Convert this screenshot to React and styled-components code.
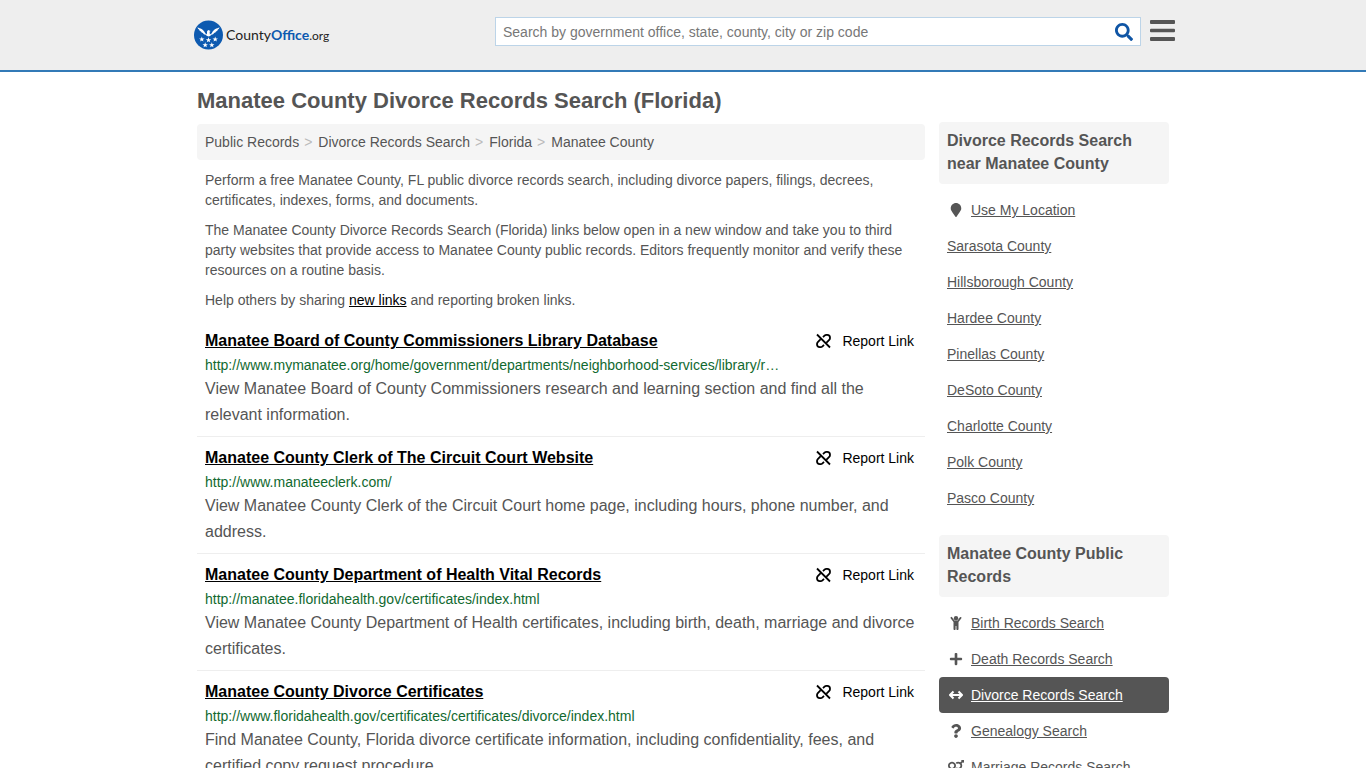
import React from "react";
import styled, { createGlobalStyle } from "styled-components";
import {
  FaSearch,
  FaMapMarker,
  FaPlus,
  FaQuestion,
  FaVenusMars,
} from "react-icons/fa";

const COLORS = {
  text: "#555",
  blue: "#0f55a5",
  brand: "#0d5ab0",
  line: "#337ab7",
  panel: "#f5f5f5",
  url: "#11692f",
};

const GlobalStyle = createGlobalStyle`
  * {
    box-sizing: border-box;
  }
  html {
    scrollbar-width: none;
  }
  body {
    margin: 0;
    background: #fff;
    color: ${COLORS.text};
    font-family: "Liberation Sans", Arial, sans-serif;
    font-size: 14px;
    line-height: 20px;
  }
`;

const Header = styled.header`
  background: #eee;
  border-bottom: 2px solid ${COLORS.line};
`;

const HeaderInner = styled.div`
  display: flex;
  align-items: flex-start;
  max-width: 984px;
  height: 70px;
  margin: 0 auto;
  padding-top: 17px;
`;

const LogoLink = styled.a`
  display: flex;
  align-items: center;
  flex: 0 0 304px;
  height: 36px;
  color: #222;
  font-family: Lato, sans-serif;
  font-size: 14px;
  text-decoration: none;
  b {
    color: ${COLORS.brand};
  }
  small {
    font-size: 12px;
  }
  svg {
    margin-right: 2px;
  }
`;

const SearchForm = styled.form`
  display: flex;
  flex: 1;
  height: 29px;
  border: 1px solid #bcd4e8;
  background: #fff;
`;

const SearchInput = styled.input`
  flex: 1;
  min-width: 0;
  padding: 0 7px;
  border: 0;
  outline: 0;
  background: transparent;
  font: inherit;
  &::placeholder {
    color: #777;
    opacity: 1;
  }
`;

const IconButton = styled.button`
  display: flex;
  align-items: center;
  padding: 0;
  border: 0;
  background: transparent;
  color: ${(props) => props.$color};
  cursor: pointer;
`;

const SearchButton = styled(IconButton)`
  padding: 0 7px;
`;

const MenuButton = styled(IconButton)`
  margin-left: 9px;
`;

const Page = styled.div`
  display: grid;
  grid-template-columns: minmax(0, 1fr) 230px;
  column-gap: 14px;
  max-width: 972px;
  margin: 0 auto;
`;

const Title = styled.h1`
  margin: 17px 0 11px;
  font-size: 22px;
  line-height: 24px;
`;

const Breadcrumbs = styled.nav`
  display: flex;
  padding: 8px;
  border-radius: 4px;
  background: ${COLORS.panel};
  a {
    color: ${COLORS.text};
    text-decoration: none;
  }
  a + a::before {
    content: ">";
    padding: 0 6px 0 5px;
    color: #bbb;
  }
`;

const Text = styled.p`
  margin: 10px 8px;
  a {
    color: #000;
  }
`;

const Results = styled.ul`
  margin: 0;
  padding: 0;
  list-style: none;
`;

const Result = styled.li`
  padding: 8px;
  border-bottom: 1px solid #eee;
`;

const ResultTop = styled.div`
  display: flex;
  justify-content: space-between;
  line-height: 26px;
`;

const ResultLink = styled.a`
  color: #000;
  font-size: 16px;
  font-weight: bold;
  line-height: 25px;
`;

const ReportLink = styled.a`
  display: flex;
  align-items: center;
  gap: 10px;
  padding-right: 3px;
  color: #000;
  text-decoration: none;
`;

const ResultUrl = styled.div`
  max-width: 578px;
  overflow: hidden;
  color: ${COLORS.url};
  line-height: 22px;
  text-overflow: ellipsis;
  white-space: nowrap;
`;

const ResultText = styled.div`
  font-size: 16px;
  line-height: 26px;
`;

const Sidebar = styled.aside`
  padding-top: 50px;
`;

const SideTitle = styled.h2`
  margin: 0 0 8px;
  padding: 7px 8px 9px;
  border-radius: 4px;
  background: ${COLORS.panel};
  font-size: 16px;
  line-height: 23px;
`;

const SideList = styled.ul`
  margin: 0 0 19px;
  padding: 0;
  list-style: none;
`;

const SideLink = styled.a`
  display: flex;
  align-items: center;
  height: 36px;
  padding: 0 8px;
  border-radius: 4px;
  background: ${(props) => (props.$active ? COLORS.text : "transparent")};
  color: ${(props) => (props.$active ? "#fff" : COLORS.text)};
`;

const SideIcon = styled.span`
  display: flex;
  justify-content: center;
  width: 18px;
  margin-right: 6px;
`;

const STAR = "M0-2.700L.7-.8 2.700-.8 1.100.4 1.700 2.300 0 1.200-1.700 2.300-1.100.4-2.700-.8-.7-.8z";

const STARS = [
  [9.8, 20.3],
  [16.5, 21],
  [23.2, 20.3],
  [13.2, 26],
  [19.8, 26],
];

const RESULTS = [
  {
    title: "Manatee Board of County Commissioners Library Database",
    url: "http://www.mymanatee.org/home/government/departments/neighborhood-services/library/r…",
    text: "View Manatee Board of County Commissioners research and learning section and find all the relevant information.",
  },
  {
    title: "Manatee County Clerk of The Circuit Court Website",
    url: "http://www.manateeclerk.com/",
    text: "View Manatee County Clerk of the Circuit Court home page, including hours, phone number, and address.",
  },
  {
    title: "Manatee County Department of Health Vital Records",
    url: "http://manatee.floridahealth.gov/certificates/index.html",
    text: "View Manatee County Department of Health certificates, including birth, death, marriage and divorce certificates.",
  },
  {
    title: "Manatee County Divorce Certificates",
    url: "http://www.floridahealth.gov/certificates/certificates/divorce/index.html",
    text: "Find Manatee County, Florida divorce certificate information, including confidentiality, fees, and certified copy request procedure.",
  },
];

const NEARBY = [
  { name: "Use My Location", icon: FaMapMarker },
  { name: "Sarasota County" },
  { name: "Hillsborough County" },
  { name: "Hardee County" },
  { name: "Pinellas County" },
  { name: "DeSoto County" },
  { name: "Charlotte County" },
  { name: "Polk County" },
  { name: "Pasco County" },
];

const RECORDS = [
  { name: "Birth Records Search", icon: Child },
  { name: "Death Records Search", icon: FaPlus },
  { name: "Divorce Records Search", icon: Arrows, active: true },
  { name: "Genealogy Search", icon: FaQuestion },
  { name: "Marriage Records Search", icon: FaVenusMars, size: 16 },
];

function Logo() {
  return (
    <svg width="33" height="32" viewBox="-1 0 33 32" aria-hidden="true">
      <circle cx="16.5" cy="16" r="14.5" fill={COLORS.brand} />
      <g fill="#fff">
        <path d="M5.500 8.300C8 9.600 11.500 10 13.200 14.200l1.700 1.300.2-3.300 1.100-1.200 2.400.9-1 .8.300 2.800 1.900-1.300C21.500 10 25 9.600 27.500 8.300c-.2 1.300-.9 2-1.800 2.400.1.900-.7 1.500-1.800 1.700 0 .9-.8 1.400-1.900 1.500-.4 1-1.300 1.500-2.400 1.500-.7 1-1.800 1.600-3.100 2.200-1.300-.6-2.400-1.200-3.100-2.200-1.100 0-2-.5-2.400-1.500-1.100-.1-1.900-.6-1.900-1.500-1.100-.2-1.900-.8-1.800-1.700-.9-.4-1.600-1.100-1.800-2.400z" />
        {STARS.map(([x, y]) => (
          <path key={x} d={STAR} transform={`translate(${x} ${y})`} />
        ))}
      </g>
    </svg>
  );
}

function BrokenLink() {
  return (
    <svg width="17" height="16" viewBox="0 0 17 16" fill="none" stroke="currentColor" strokeWidth="1.8" aria-hidden="true">
      <path d="M2 1.500l13 13" />
      <path d="M8 4.200l1.500-1.500a2.800 2.800 0 0 1 2-.8h.7a2.800 2.800 0 0 1 2.800 2.800v.2a2.800 2.800 0 0 1-.8 2L11.300 9.800" />
      <path d="M9 11.800l-1.500 1.500a2.800 2.800 0 0 1-2 .8h-.7A2.800 2.800 0 0 1 2 11.300v-.2a2.800 2.800 0 0 1 .8-2L5.700 6.200" />
    </svg>
  );
}

function Child() {
  return (
    <svg width="14" height="14" viewBox="0 0 14 14" fill="currentColor" aria-hidden="true">
      <circle cx="7" cy="2.300" r="2.200" />
      <path d="M1.800 1.200a.9.900 0 0 1 1.300 0L5.400 4.400h3.200l2.300-3.200a.9.900 0 0 1 1.300 1.300L9.500 6v7a1 1 0 0 1-2.100 0V10h-.8v3a1 1 0 0 1-2.100 0V6L1.800 2.500a.9.900 0 0 1 0-1.300z" />
    </svg>
  );
}

function Arrows() {
  return (
    <svg width="14" height="14" viewBox="0 0 14 14" fill="none" stroke="currentColor" strokeWidth="2" strokeLinejoin="round" aria-hidden="true">
      <path d="M1.500 7h11M4.500 3.500L1 7l3.500 3.500M9.500 3.500L13 7l-3.500 3.500" />
    </svg>
  );
}

function SideMenu({ title, items }) {
  return (
    <section>
      <SideTitle>{title}</SideTitle>
      <SideList>
        {items.map(({ name, icon: Icon, active, size = 14 }) => (
          <li key={name}>
            <SideLink href="#" $active={active}>
              {Icon && (
                <SideIcon>
                  <Icon size={size} />
                </SideIcon>
              )}
              {name}
            </SideLink>
          </li>
        ))}
      </SideList>
    </section>
  );
}

function App() {
  return (
    <>
      <GlobalStyle />
      <Header>
        <HeaderInner>
          <LogoLink href="#">
            <Logo />
            <span>
              County<b>Office</b>
              <small>.org</small>
            </span>
          </LogoLink>
          <SearchForm>
            <SearchInput
              type="text"
              aria-label="Search"
              placeholder="Search by government office, state, county, city or zip code"
            />
            <SearchButton type="submit" aria-label="Submit search" $color={COLORS.blue}>
              <FaSearch size={18} />
            </SearchButton>
          </SearchForm>
          <MenuButton type="button" aria-label="Menu" $color={COLORS.text}>
            <svg width="25" height="28" viewBox="0 0 25 28" fill="currentColor">
              <rect y="3" width="25" height="4" rx="1" />
              <rect y="11.700" width="25" height="3.600" rx="1" />
              <rect y="20" width="25" height="4" rx="1" />
            </svg>
          </MenuButton>
        </HeaderInner>
      </Header>
      <Page>
        <main>
          <Title>Manatee County Divorce Records Search (Florida)</Title>
          <Breadcrumbs aria-label="Breadcrumb">
            <a href="#">Public Records</a>
            <a href="#">Divorce Records Search</a>
            <a href="#">Florida</a>
            <a href="#">Manatee County</a>
          </Breadcrumbs>
          <Text>
            Perform a free Manatee County, FL public divorce records search, including divorce
            papers, filings, decrees, certificates, indexes, forms, and documents.
          </Text>
          <Text>
            The Manatee County Divorce Records Search (Florida) links below open in a new window and
            take you to third party websites that provide access to Manatee County public records.
            Editors frequently monitor and verify these resources on a routine basis.
          </Text>
          <Text>
            Help others by sharing <a href="#">new links</a> and reporting broken links.
          </Text>
          <Results>
            {RESULTS.map((item) => (
              <Result key={item.title}>
                <ResultTop>
                  <ResultLink href="#">{item.title}</ResultLink>
                  <ReportLink href="#">
                    <BrokenLink />
                    Report Link
                  </ReportLink>
                </ResultTop>
                <ResultUrl>{item.url}</ResultUrl>
                <ResultText>{item.text}</ResultText>
              </Result>
            ))}
          </Results>
        </main>
        <Sidebar>
          <SideMenu title="Divorce Records Search near Manatee County" items={NEARBY} />
          <SideMenu title="Manatee County Public Records" items={RECORDS} />
        </Sidebar>
      </Page>
    </>
  );
}

export default App;
